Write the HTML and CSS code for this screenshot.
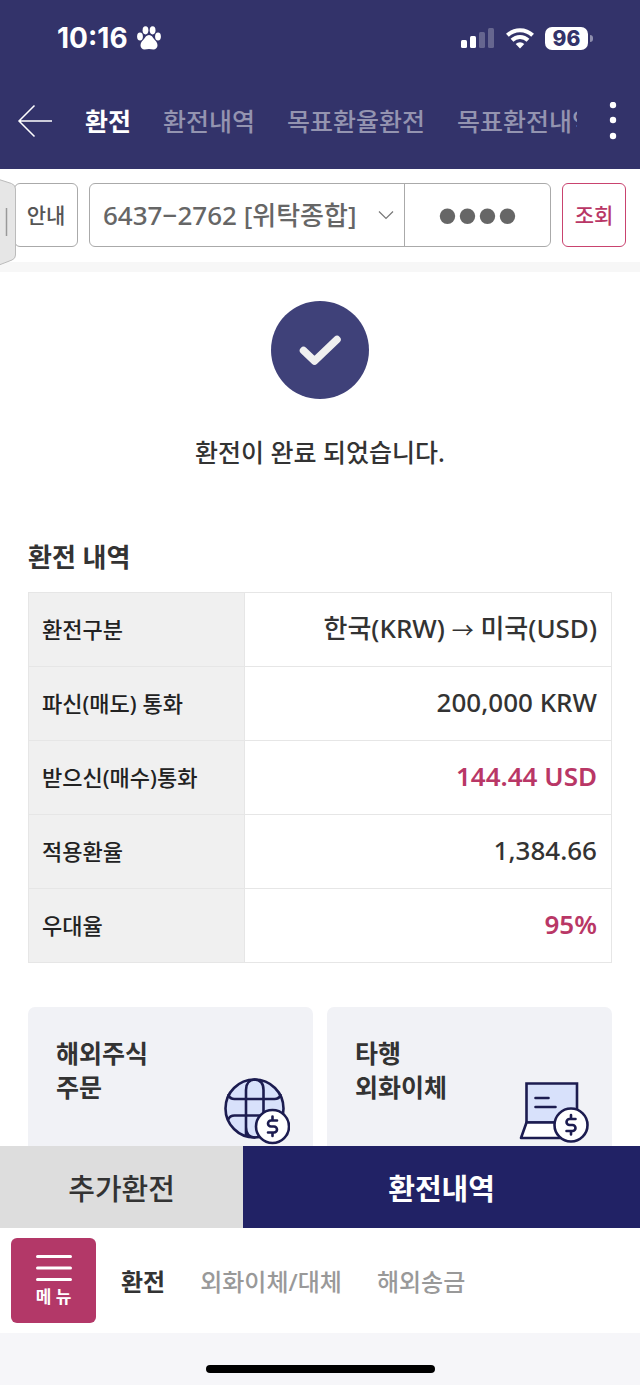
FILE: index.html
```html
<!DOCTYPE html>
<html lang="ko">
<head>
  <meta charset="UTF-8">
  <meta name="viewport" content="width=device-width, initial-scale=1.0">
  <title>환전</title>
  <link rel="stylesheet" href="styles.css">
</head>
<body>
  <header class="header">
    <div class="status-bar">
      <div class="status-time">
        <span>10:16</span>
        <svg width="24" height="24" viewBox="0 0 24 24" fill="#fff">
          <ellipse cx="8.500" cy="4.300" rx="2.900" ry="4.100"/>
          <ellipse cx="15.600" cy="4.300" rx="2.900" ry="4.100"/>
          <ellipse cx="3" cy="10.600" rx="2.900" ry="4"/>
          <ellipse cx="21" cy="10.600" rx="2.900" ry="4"/>
          <path d="M12 9c2.500 0 3.800 2.300 5 4 1.200 1.800 3.500 3.100 3.500 6.200 0 2.500-1.800 4.300-4 4.300-1.600 0-3-.500-4.500-.500s-2.900.500-4.500.500c-2.200 0-4-1.800-4-4.300 0-3.100 2.300-4.400 3.500-6.200 1.200-1.700 2.500-4 5-4z"/>
        </svg>
      </div>
      <div class="status-icons">
        <svg width="34" height="22" viewBox="0 0 34 22" fill="#fff">
          <rect x="0" y="13" width="6" height="8" rx="1.500"/>
          <rect x="9" y="9" width="6" height="12" rx="1.500"/>
          <rect x="18" y="5" width="6" height="16" rx="1.500" opacity=".25"/>
          <rect x="27" y="1" width="6" height="20" rx="1.500" opacity=".25"/>
        </svg>
        <svg width="30" height="22" viewBox="0 0 30 22" fill="none" stroke="#fff" stroke-width="4">
          <path d="M2.400 8.300a18 18 0 0 1 25.200 0"/>
          <path d="M7 13.200a11.500 11.500 0 0 1 16 0"/>
          <path d="M15 21.500l-4.300-4.400a6.200 6.200 0 0 1 8.600 0z" fill="#fff" stroke="none"/>
        </svg>
        <div class="battery"><span class="battery-level">96</span></div>
      </div>
    </div>
    <nav class="top-nav">
      <button class="icon-btn" type="button" aria-label="뒤로">
        <svg width="36" height="34" viewBox="0 0 36 34" fill="none" stroke="#fff" stroke-width="1.500">
          <path d="M17.500 1.500L2 17l15.500 15.500M2 17h33"/>
        </svg>
      </button>
      <div class="tabs">
        <a class="tab active" href="#">환전</a>
        <a class="tab" href="#">환전내역</a>
        <a class="tab" href="#">목표환율환전</a>
        <a class="tab" href="#">목표환전내역</a>
      </div>
      <button class="icon-btn" type="button" aria-label="더보기">
        <svg width="8" height="38" viewBox="0 0 8 38" fill="#fff">
          <circle cx="4" cy="3" r="3.200"/>
          <circle cx="4" cy="18" r="3.200"/>
          <circle cx="4" cy="34" r="3.200"/>
        </svg>
      </button>
    </nav>
  </header>

  <form class="account-bar">
    <button class="side-handle" type="button" aria-label="열기">
      <svg width="16" height="88" viewBox="0 0 16 88">
        <path d="M-1 1.500L11.500 5.500Q15.500 7 15.500 11V77Q15.500 80.500 12 82L-1 87z" fill="#e6e6e6" stroke="#bbb"/>
        <path d="M6.500 30v28" stroke="#999" stroke-width="1.500"/>
      </svg>
    </button>
    <button class="box-btn" type="button">안내</button>
    <div class="account">
      <div class="account-select">
        <select aria-label="계좌번호">
          <option>6437−2762 [위탁종합]</option>
        </select>
        <svg class="chevron" width="16" height="10" viewBox="0 0 16 10" fill="none" stroke="#777" stroke-width="1.200">
          <path d="M1 1.500l7 7 7-7"/>
        </svg>
      </div>
      <input class="account-password" type="password" value="1234" aria-label="계좌 비밀번호">
    </div>
    <button class="box-btn box-btn-pink" type="button">조회</button>
  </form>

  <main class="content">
    <section class="complete">
      <svg width="98" height="98" viewBox="0 0 98 98" fill="none">
        <circle cx="49" cy="49" r="49" fill="#3f4179"/>
        <path d="M32.500 49.500L43.500 60 66 38.500" stroke="#f0f0f0" stroke-width="7.500" stroke-linecap="round" stroke-linejoin="round"/>
      </svg>
      <p class="complete-text">환전이 완료 되었습니다.</p>
    </section>

    <h2 class="section-title">환전 내역</h2>
    <table class="detail-table">
      <tr>
        <th scope="row">환전구분</th>
        <td>한국(KRW) <span class="arrow">→</span> 미국(USD)</td>
      </tr>
      <tr>
        <th scope="row">파신(매도) 통화</th>
        <td>200,000 KRW</td>
      </tr>
      <tr>
        <th scope="row">받으신(매수)통화</th>
        <td class="point">144.44 USD</td>
      </tr>
      <tr>
        <th scope="row">적용환율</th>
        <td>1,384.66</td>
      </tr>
      <tr>
        <th scope="row">우대율</th>
        <td class="point">95%</td>
      </tr>
    </table>

    <div class="cards">
      <a class="card" href="#">
        <span>해외주식<br>주문</span>
        <svg width="70" height="68" viewBox="0 0 70 68" fill="none" stroke="#1c1c50" stroke-width="2.600" stroke-linecap="round">
          <circle cx="34.500" cy="31.500" r="29" fill="#d8e1fb"/>
          <path d="M26 57V13q0-10 8.500-10.500Q43.500 3 43.500 13v26M26 50q0 10 8.500 10.500M8.500 18q1.500 4 6 4h40q4.500 0 6-4M8.500 42q1.500-3.500 6-3.500h28"/>
          <circle cx="52.500" cy="49.500" r="16.500" fill="#fff"/>
          <path d="M57 43.500h-6a3 3 0 0 0 0 6h3a3 3 0 0 1 0 6h-6M52.500 39.500v3.500M52.500 56v3"/>
        </svg>
      </a>
      <a class="card" href="#">
        <span>타행<br>외화이체</span>
        <svg width="70" height="68" viewBox="0 0 70 68" fill="none" stroke="#1c1c50" stroke-width="2.600" stroke-linecap="round">
          <path d="M7.500 6.500h50.500v39H7.500z" fill="#d8e1fb"/>
          <path d="M7.500 45.500h50v15.500H2z" fill="#fff" stroke-linejoin="round"/>
          <path d="M16.500 21h13M16.500 30h20"/>
          <circle cx="52" cy="48" r="16.500" fill="#fff"/>
          <path d="M56.500 42h-6a3 3 0 0 0 0 6h3a3 3 0 0 1 0 6h-6M52 38v3.500M52 54.500v3"/>
        </svg>
      </a>
    </div>
  </main>

  <footer>
    <div class="actions">
      <button class="action" type="button">추가환전</button>
      <button class="action action-main" type="button">환전내역</button>
    </div>
    <nav class="bottom-nav">
      <button class="menu-btn" type="button">
        <svg width="36" height="28" viewBox="0 0 36 28" stroke="#fff" stroke-width="3" stroke-linecap="round">
          <path d="M1.500 2.500h33M1.500 14h33M1.500 25.500h33"/>
        </svg>
        <span>메 뉴</span>
      </button>
      <a class="bottom-link active" href="#">환전</a>
      <a class="bottom-link" href="#">외화이체/대체</a>
      <a class="bottom-link" href="#">해외송금</a>
    </nav>
    <div class="home-area"><span class="home-bar"></span></div>
  </footer>
</body>
</html>
```
FILE: styles.css
```css
* {
  box-sizing: border-box;
}
body {
  margin: 0;
  height: 100vh;
  display: flex;
  flex-direction: column;
  font-family: "Noto Sans", "Noto Sans CJK KR", sans-serif;
  font-weight: 500;
  color: #333;
  background-color: #fff;
}
button,
input,
select {
  margin: 0;
  padding: 0;
  border: 0;
  border-radius: 0;
  background: none;
  font: inherit;
  color: inherit;
}
a {
  color: inherit;
  text-decoration: none;
}
svg {
  display: block;
  flex: none;
}

/* header */
.header {
  flex: none;
  background-color: #33336a;
  color: #fff;
}
.status-bar {
  display: flex;
  justify-content: space-between;
  align-items: center;
  height: 76px;
  padding: 0 52px 0 57px;
  font-family: Inter, sans-serif;
}
.status-time {
  display: flex;
  align-items: center;
  gap: 9px;
  font-size: 28px;
  font-weight: 700;
}
.status-icons {
  display: flex;
  align-items: center;
  gap: 10px;
}
.battery {
  position: relative;
}
.battery::after {
  content: "";
  position: absolute;
  right: -5px;
  top: 8px;
  width: 3px;
  height: 7px;
  border-radius: 0 3px 3px 0;
  background-color: #8f8fae;
}
.battery-level {
  display: block;
  width: 43px;
  border-radius: 7px;
  background-color: #fff;
  color: #33336a;
  font-size: 21px;
  font-weight: 800;
  line-height: 23px;
  text-align: center;
}
.top-nav {
  display: flex;
  align-items: center;
  height: 93px;
  padding: 0 23px 4px 17px;
}
.icon-btn {
  cursor: pointer;
}
.tabs {
  flex: 1;
  display: flex;
  gap: 32px;
  margin: 0 32px;
  overflow: hidden;
  white-space: nowrap;
  font-size: 25px;
  line-height: 36px;
}
.tab {
  color: #9494b0;
}
.tab.active {
  color: #fff;
  font-weight: 700;
}

/* account */
.account-bar {
  position: relative;
  flex: none;
  display: flex;
  gap: 11px;
  padding: 14px 14px 15px;
  border-bottom: 10px solid #f7f7f7;
}
.side-handle {
  position: absolute;
  left: 0;
  top: 9px;
}
.box-btn {
  width: 64px;
  height: 64px;
  padding-bottom: 2px;
  border: 1px solid #aaa;
  border-radius: 6px;
  font-size: 21px;
  color: #555;
}
.box-btn-pink {
  border-color: #c9436f;
  color: #b93766;
}
.account {
  flex: 1;
  display: flex;
  height: 64px;
  border: 1px solid #aaa;
  border-radius: 6px;
  overflow: hidden;
}
.account-select {
  position: relative;
  flex: 1;
}
.account-select select {
  appearance: none;
  width: 100%;
  height: 100%;
  padding-left: 13px;
  font-size: 26px;
  color: #666;
}
.chevron {
  position: absolute;
  right: 10px;
  top: 26px;
  pointer-events: none;
}
.account-password {
  width: 146px;
  height: 100%;
  border-left: 1px solid #aaa;
  font-family: "Liberation Sans", sans-serif;
  font-size: 57px;
  text-align: center;
  color: #666;
}

/* content */
.content {
  flex: 1;
  min-height: 0;
  padding: 29px 28px;
  overflow-y: auto;
  scrollbar-width: none;
}
.complete {
  display: flex;
  flex-direction: column;
  align-items: center;
}
.complete-text {
  margin: 33px 0 65px;
  font-size: 25px;
  line-height: 40px;
}
.section-title {
  margin: 0 0 15px;
  font-size: 26px;
  font-weight: 700;
  line-height: 40px;
}
.detail-table {
  width: 100%;
  border-collapse: collapse;
  border: 1px solid #e2e2e2;
}
.detail-table th,
.detail-table td {
  height: 74px;
  padding: 0 14px 3px 13px;
  border: 1px solid #e6e6e6;
}
.detail-table th {
  width: 216px;
  background-color: #f0f0f0;
  color: #222;
  font-size: 22px;
  font-weight: 500;
  text-align: left;
}
.detail-table td {
  font-size: 26px;
  line-height: 36px;
  text-align: right;
}
.detail-table .point {
  color: #b93766;
  font-weight: 600;
}
.arrow {
  font-family: "Noto Sans CJK KR", sans-serif;
  font-size: 22px;
  font-weight: 400;
}
.cards {
  display: flex;
  gap: 14px;
  margin-top: 44px;
}
.card {
  flex: 1;
  display: flex;
  justify-content: space-between;
  align-items: flex-start;
  min-height: 166px;
  padding: 29px 23px 28px 28px;
  border-radius: 7px;
  background-color: #f1f2f6;
  font-size: 25px;
  font-weight: 700;
  line-height: 34px;
}
.card svg {
  align-self: flex-end;
}

/* footer */
footer {
  flex: none;
}
.actions {
  display: flex;
  height: 82px;
}
.action {
  width: 38%;
  background-color: #ddd;
  font-size: 29px;
}
.action-main {
  flex: 1;
  background-color: #212265;
  color: #fff;
  font-weight: 700;
}
.bottom-nav {
  display: flex;
  align-items: center;
  gap: 35px;
  padding: 10px 11px;
  font-size: 24px;
}
.menu-btn {
  display: flex;
  flex-direction: column;
  align-items: center;
  justify-content: center;
  gap: 4px;
  width: 85px;
  height: 85px;
  margin-right: -10px;
  border-radius: 6px;
  background-color: #b33868;
  color: #fff;
  font-size: 17px;
  font-weight: 700;
  line-height: 22px;
}
.bottom-link {
  color: #999;
}
.bottom-link.active {
  color: #333;
  font-weight: 700;
}
.home-area {
  display: flex;
  justify-content: center;
  align-items: flex-end;
  height: 52px;
  padding-bottom: 12px;
  background-color: #f6f6f9;
}
.home-bar {
  width: 229px;
  height: 8px;
  border-radius: 4px;
  background-color: #000;
}
```
